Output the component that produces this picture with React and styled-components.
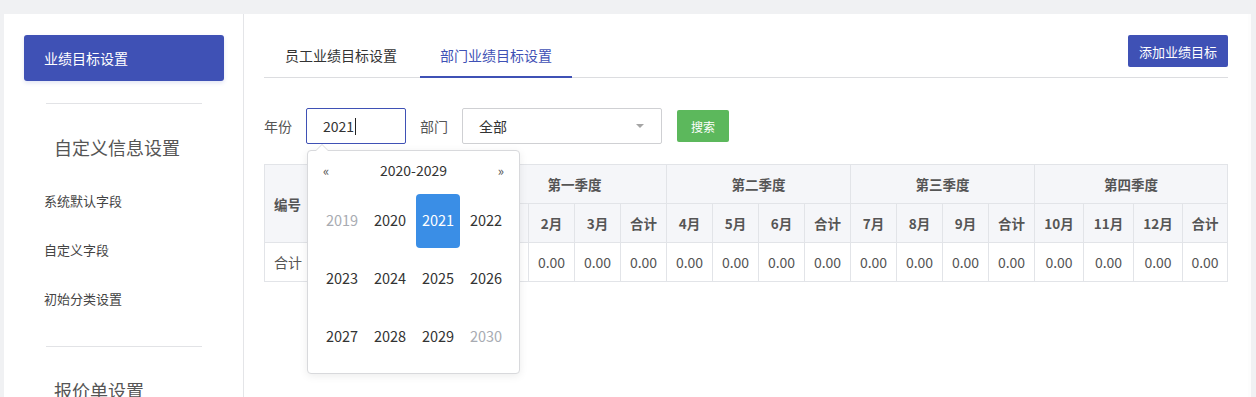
import React from 'react';
import styled, { createGlobalStyle } from 'styled-components';

const GlobalStyle = createGlobalStyle`
  html, body {
    margin: 0;
    padding: 0;
    background: #f0f1f3;
    font-family: "Noto Sans CJK SC", "Noto Sans", "Liberation Sans", sans-serif;
    color: #333;
  }
  * { box-sizing: border-box; }
`;

const Page = styled.div`
  display: flex;
  height: 397px;
  padding: 14px 9px 0 4px;
  overflow: hidden;
`;

const Sidebar = styled.aside`
  width: 240px;
  flex-shrink: 0;
  background: #fff;
  border-right: 1px solid #e4e5e8;
  padding: 21px 19px 0 20px;
`;

const ActiveItem = styled.div`
  height: 46px;
  display: flex;
  align-items: center;
  padding-left: 20px;
  background: #3f51b5;
  color: #fff;
  font-size: 14px;
  border-radius: 3px;
  box-shadow: 0 2px 4px rgba(63, 81, 181, 0.15);
`;

const Divider = styled.div`
  height: 1px;
  background: #e2e3e6;
  margin: ${(p) => p.$top}px 22px 0 22px;
`;

const SectionTitle = styled.div`
  font-size: 18px;
  color: #555;
  padding-left: 30px;
  line-height: 24px;
  margin-top: ${(p) => p.$top}px;
`;

const MenuItem = styled.div`
  font-size: 13px;
  color: #444;
  padding-left: 20px;
  line-height: 20px;
  margin-top: ${(p) => p.$top}px;
`;

const Main = styled.main`
  flex: 1;
  background: #fff;
  padding: 20px 20px 0 20px;
  border-right: 3px solid #fdfdfd;
`;

const TabBar = styled.div`
  display: flex;
  align-items: flex-start;
  border-bottom: 1px solid #dcdde0;
`;

const Tab = styled.div`
  height: 44px;
  padding: 0 20px 1px;
  margin-left: ${(p) => (p.$first ? 1 : 3)}px;
  display: flex;
  align-items: center;
  font-size: 14px;
  color: ${(p) => (p.$active ? '#3f51b5' : '#333')};
  border-bottom: 2px solid ${(p) => (p.$active ? '#3f51b5' : 'transparent')};
  margin-bottom: -1px;
`;

const AddButton = styled.button`
  margin-left: auto;
  margin-top: 1px;
  height: 32px;
  width: 100px;
  border: none;
  border-radius: 2px;
  background: #3f51b5;
  color: #fff;
  font-family: inherit;
  font-size: 13px;
  padding: 0;
`;

const FilterRow = styled.div`
  display: flex;
  align-items: center;
  margin-top: 30px;
  height: 36px;
`;

const Label = styled.span`
  font-size: 14px;
  color: #555;
  margin-right: 14px;
`;

const YearField = styled.div`
  position: relative;
  width: 100px;
  height: 36px;
  margin-right: 14px;
`;

const YearBox = styled.div`
  height: 36px;
  border: 1px solid #3f51b5;
  border-radius: 2px;
  padding-left: 16px;
  display: flex;
  align-items: center;
  font-size: 14px;
  color: #333;
`;

const Caret = styled.span`
  width: 1px;
  height: 17px;
  background: #222;
  margin-left: 1px;
`;

const SelectBox = styled.div`
  width: 200px;
  height: 36px;
  border: 1px solid #cfd0d3;
  border-radius: 2px;
  padding: 0 16px;
  display: flex;
  align-items: center;
  justify-content: space-between;
  font-size: 14px;
  color: #333;
  margin-right: 15px;
`;

const Arrow = styled.span`
  width: 0;
  height: 0;
  border-left: 4px solid transparent;
  border-right: 4px solid transparent;
  border-top: 4px solid #a5a5a5;
  margin-right: 1px;
`;

const SearchButton = styled.button`
  width: 52px;
  height: 32px;
  border: none;
  border-radius: 2px;
  background: #5cb85c;
  color: #fff;
  font-family: inherit;
  font-size: 12px;
  padding: 0;
`;

const Picker = styled.div`
  position: absolute;
  top: 42px;
  left: 1px;
  width: 213px;
  height: 224px;
  background: #fff;
  border: 1px solid #d8d9dc;
  border-radius: 4px;
  box-shadow: 0 2px 8px rgba(0, 0, 0, 0.08);
  padding: 7px 11px 11px 12px;
  z-index: 5;

  &::before, &::after {
    content: '';
    position: absolute;
    left: 8px;
    width: 0;
    height: 0;
    border-left: 6px solid transparent;
    border-right: 6px solid transparent;
  }
  &::before {
    top: -7px;
    border-bottom: 6px solid #d8d9dc;
  }
  &::after {
    top: -6px;
    border-bottom: 6px solid #fff;
  }
`;

const PickerHead = styled.div`
  display: flex;
  align-items: center;
  justify-content: space-between;
  height: 24px;
  padding: 0 4px 0 3px;
  font-size: 14px;
  color: #333;
`;

const Chevron = styled.span`
  font-size: 13px;
  color: #555;
`;

const YearGrid = styled.div`
  display: grid;
  grid-template-columns: repeat(4, 44px);
  grid-auto-rows: 54px;
  justify-content: space-between;
  row-gap: 4px;
  margin-top: 12px;
`;

const YearCell = styled.div`
  display: flex;
  align-items: center;
  justify-content: center;
  padding-bottom: 3px;
  font-size: 14.5px;
  border-radius: 4px;
  color: ${(p) => (p.$selected ? '#fff' : p.$muted ? '#a8abb2' : '#333')};
  background: ${(p) => (p.$selected ? '#3a8ee6' : 'transparent')};
`;

const Table = styled.table`
  margin-top: 20px;
  width: 963px;
  border-collapse: collapse;
  table-layout: fixed;
  font-size: 14px;
  color: #555;

  th, td {
    border: 1px solid #e2e4e8;
    height: 39px;
    padding: 0;
    text-align: center;
    white-space: nowrap;
    overflow: hidden;
  }
  th {
    background: #f5f6f9;
    font-weight: 700;
    font-size: 13.5px;
  }
`;

const LeftCell = styled.th`
  text-align: left !important;
  padding-left: 9px !important;
`;

const LeftTd = styled.td`
  text-align: left !important;
  padding-left: 9px !important;
`;

const years = [2019, 2020, 2021, 2022, 2023, 2024, 2025, 2026, 2027, 2028, 2029, 2030];
const quarters = [
  { name: '第一季度', months: ['1月', '2月', '3月'] },
  { name: '第二季度', months: ['4月', '5月', '6月'] },
  { name: '第三季度', months: ['7月', '8月', '9月'] },
  { name: '第四季度', months: ['10月', '11月', '12月'] },
];
const colWidths = [56, 162, 46, 46, 46, 46, 46, 46, 46, 46, 46, 46, 46, 46, 49, 50, 49, 45];

export default function App() {
  return (
    <>
      <GlobalStyle />
      <Page>
        <Sidebar>
          <ActiveItem>业绩目标设置</ActiveItem>
          <Divider $top={22} />
          <SectionTitle $top={31}>自定义信息设置</SectionTitle>
          <MenuItem $top={32}>系统默认字段</MenuItem>
          <MenuItem $top={29}>自定义字段</MenuItem>
          <MenuItem $top={29}>初始分类设置</MenuItem>
          <Divider $top={37} />
          <SectionTitle $top={31}>报价单设置</SectionTitle>
        </Sidebar>
        <Main>
          <TabBar>
            <Tab $first>员工业绩目标设置</Tab>
            <Tab $active>部门业绩目标设置</Tab>
            <AddButton>添加业绩目标</AddButton>
          </TabBar>
          <FilterRow>
            <Label>年份</Label>
            <YearField>
              <YearBox>
                2021
                <Caret />
              </YearBox>
              <Picker>
                <PickerHead>
                  <Chevron>«</Chevron>
                  <span>2020-2029</span>
                  <Chevron>»</Chevron>
                </PickerHead>
                <YearGrid>
                  {years.map((y) => (
                    <YearCell
                      key={y}
                      $selected={y === 2021}
                      $muted={y === 2019 || y === 2030}
                    >
                      {y}
                    </YearCell>
                  ))}
                </YearGrid>
              </Picker>
            </YearField>
            <Label>部门</Label>
            <SelectBox>
              全部
              <Arrow />
            </SelectBox>
            <SearchButton>搜索</SearchButton>
          </FilterRow>
          <Table>
            <colgroup>
              {colWidths.map((w, i) => (
                <col key={i} style={{ width: w }} />
              ))}
            </colgroup>
            <thead>
              <tr>
                <LeftCell rowSpan={2}>编号</LeftCell>
                <th rowSpan={2}>部门</th>
                {quarters.map((q) => (
                  <th key={q.name} colSpan={4}>
                    {q.name}
                  </th>
                ))}
              </tr>
              <tr>
                {quarters.map((q) => (
                  <React.Fragment key={q.name}>
                    {q.months.map((m) => (
                      <th key={m}>{m}</th>
                    ))}
                    <th>合计</th>
                  </React.Fragment>
                ))}
              </tr>
            </thead>
            <tbody>
              <tr>
                <LeftTd>合计</LeftTd>
                <td></td>
                {Array.from({ length: 16 }).map((_, i) => (
                  <td key={i}>0.00</td>
                ))}
              </tr>
            </tbody>
          </Table>
        </Main>
      </Page>
    </>
  );
}
